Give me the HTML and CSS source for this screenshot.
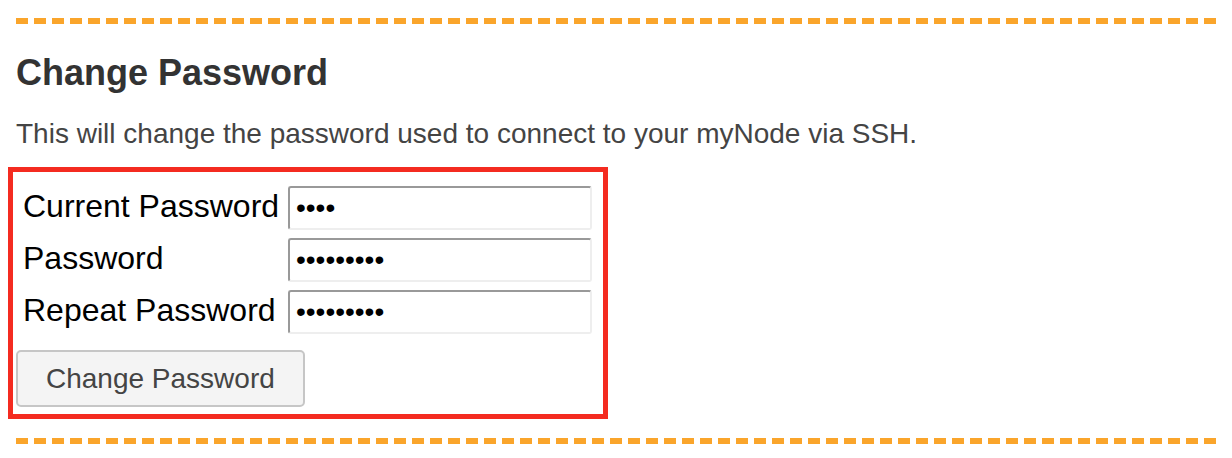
FILE: index.html
```html
<!DOCTYPE html>
<html>
<head>
<meta charset="utf-8">
<link rel="stylesheet" href="styles.css">
</head>
<body>
<div class="page">
  <div class="dash"></div>
  <h2 class="title">Change Password</h2>
  <p class="desc">This will change the password used to connect to your myNode via SSH.</p>
  <form class="pwform">
    <div class="grid">
      <label class="lbl">Current Password</label>
      <input class="field" type="password" value="abcd">
      <label class="lbl">Password</label>
      <input class="field" type="password" value="abcdefghi">
      <label class="lbl">Repeat Password</label>
      <input class="field" type="password" value="abcdefghi">
    </div>
    <button class="btn" type="button">Change Password</button>
  </form>
  <div class="dash dash-bottom"></div>
</div>
</body>
</html>
```
FILE: styles.css
```css
html, body {
  margin: 0;
  padding: 0;
  background: #ffffff;
}
body {
  font-family: "Liberation Sans", Arial, sans-serif;
}
.page {
  padding: 18px 16px 0 16px;
}
.dash {
  height: 6px;
  background: repeating-linear-gradient(to right, #faa52b 0 12px, transparent 12px 18px);
}
.title {
  margin: 28px 0 0 0;
  font-size: 36px;
  line-height: 42px;
  font-weight: bold;
  color: #333333;
}
.desc {
  margin: 24px 0 0 0;
  font-size: 28px;
  line-height: 32px;
  color: #444444;
}
.pwform {
  margin: 17px 0 0 -8px;
  width: 584px;
  border: 5px solid #f42b20;
  padding: 14px 3px 7px 3px;
}
.grid {
  display: grid;
  grid-template-columns: 272px 304px;
  grid-auto-rows: 44px;
  row-gap: 8px;
}
.lbl {
  padding-left: 7px;
  font-size: 32px;
  line-height: 40px;
  color: #000000;
  white-space: nowrap;
}
.field {
  box-sizing: border-box;
  width: 304px;
  height: 44px;
  margin: 0;
  padding: 0 6px;
  border: 2px solid;
  border-color: #999999 #eeeeee #eeeeee #999999;
  border-radius: 3px;
  background: #ffffff;
  font-family: "Liberation Sans", Arial, sans-serif;
  font-size: 28px;
  color: #000000;
  outline: none;
}
.btn {
  display: block;
  box-sizing: border-box;
  margin-top: 16px;
  height: 57px;
  padding: 0 28px;
  border: 2px solid #c6c6c6;
  border-radius: 5px;
  background: #f4f4f4;
  font-family: "Liberation Sans", Arial, sans-serif;
  font-size: 28px;
  line-height: 53px;
  color: #444444;
}
.dash-bottom {
  margin-top: 19px;
}
```
